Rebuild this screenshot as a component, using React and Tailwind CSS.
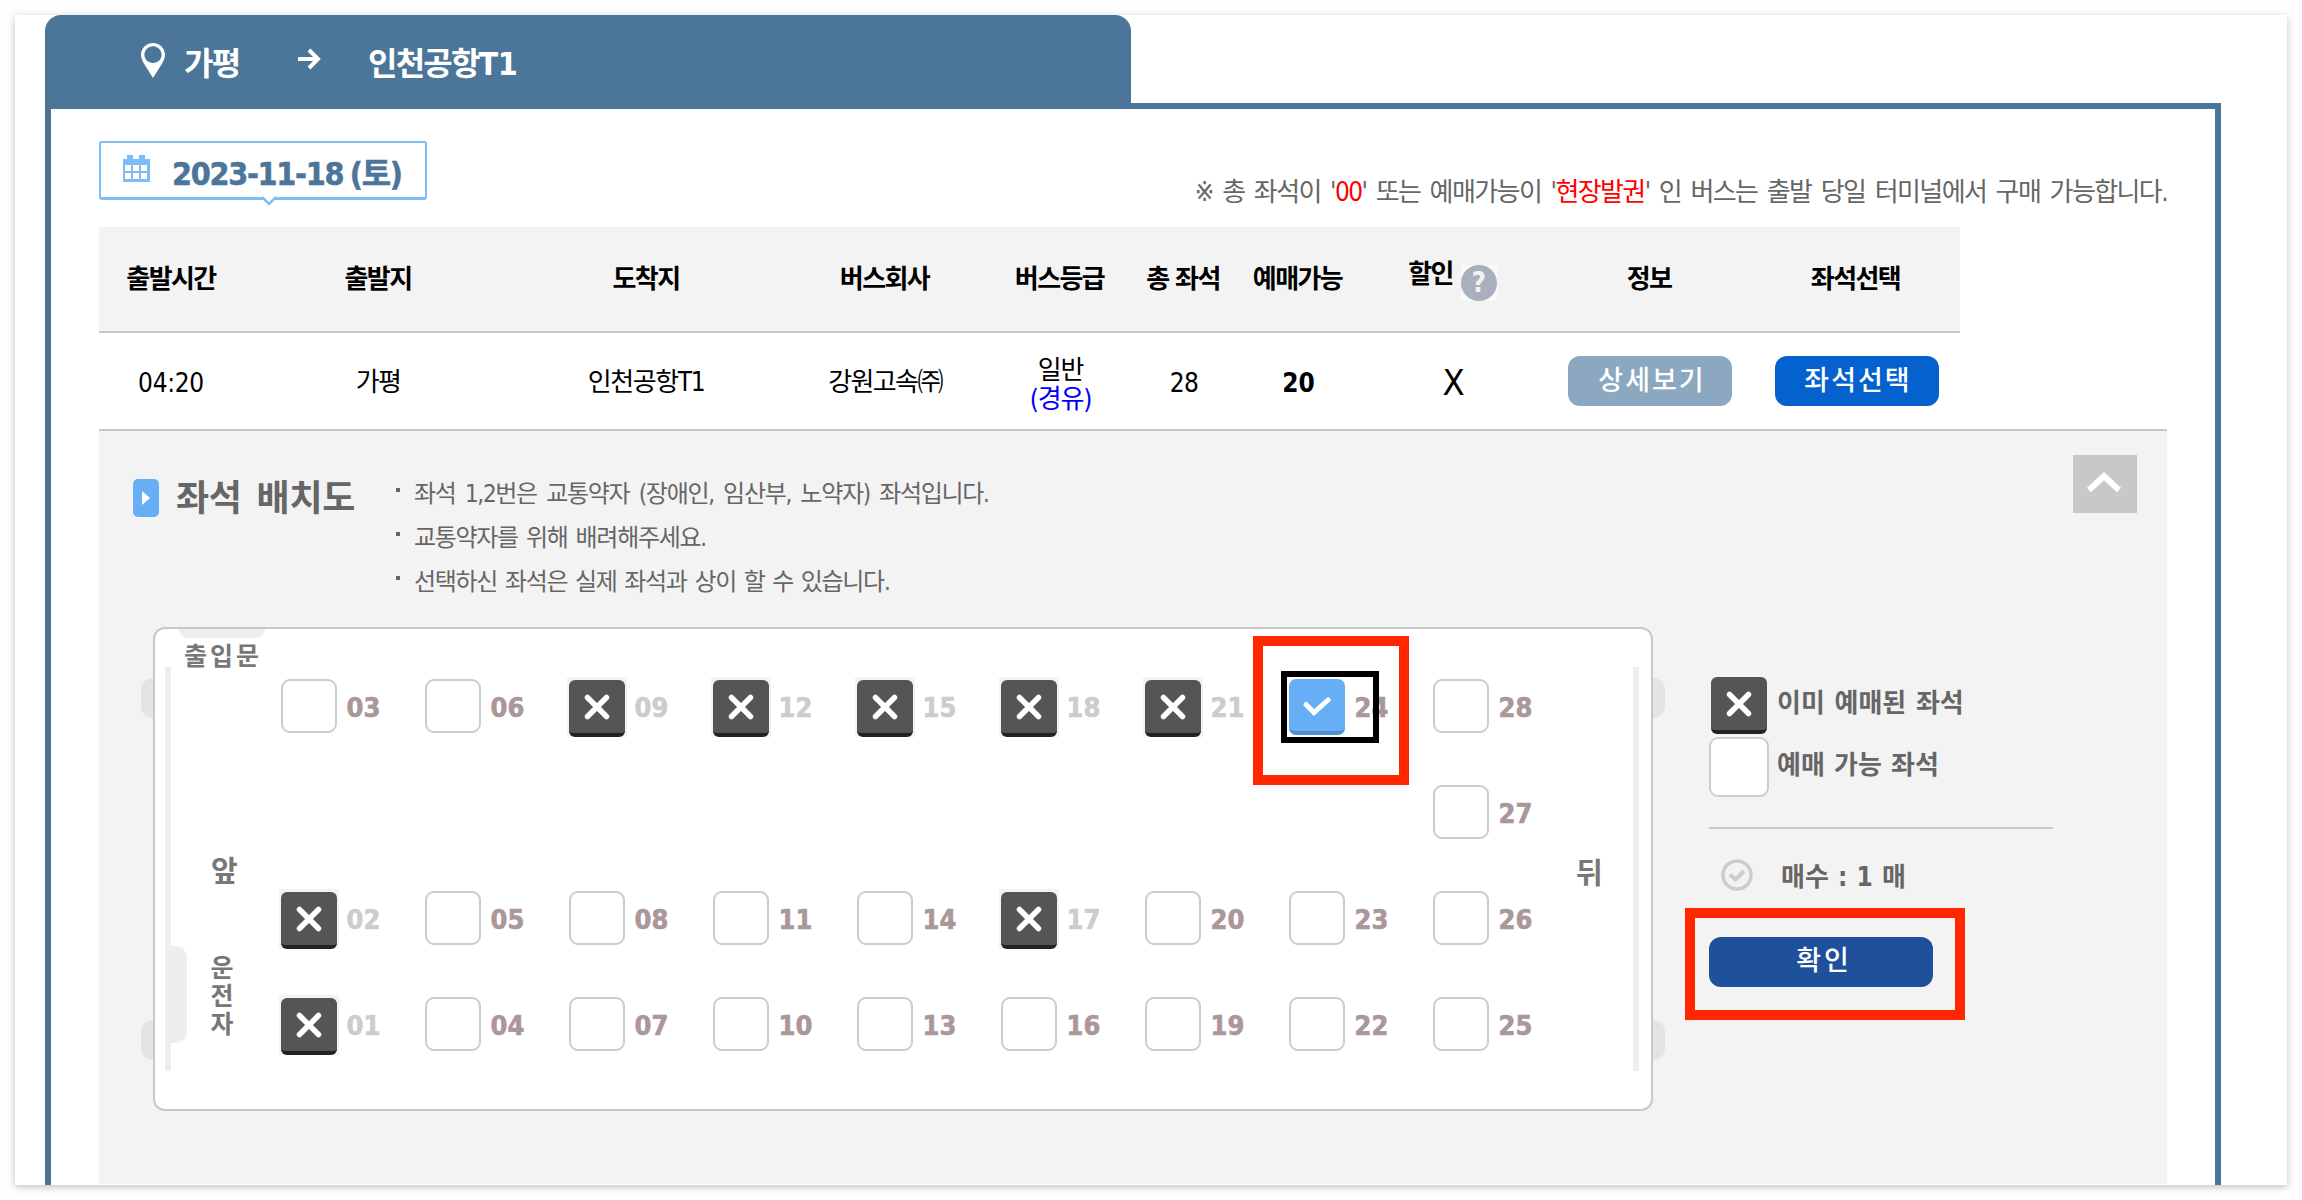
import clsx from 'clsx';

const columns = [
  { label: '출발시간', width: 'w-[144px]' },
  { label: '출발지', width: 'w-[270px]' },
  { label: '도착지', width: 'w-[266px]' },
  { label: '버스회사', width: 'w-[211px]' },
  { label: '버스등급', width: 'w-[139px]' },
  { label: '총 좌석', width: 'w-[108px]' },
  { label: '예매가능', width: 'w-[121px]' },
  { label: '할인', width: 'w-[189px]', help: true },
  { label: '정보', width: 'w-[204px]' },
  { label: '좌석선택', width: 'w-[209px]' },
];

const notices = [
  { text: '좌석 1,2번은 교통약자 (장애인, 임산부, 노약자) 좌석입니다.', spacing: '[word-spacing:3.8px]' },
  { text: '교통약자를 위해 배려해주세요.', spacing: '[word-spacing:2.5px]' },
  { text: '선택하신 좌석은 실제 좌석과 상이 할 수 있습니다.', spacing: '[word-spacing:2.2px]' },
];

// null is the aisle
const seatRows = [
  ['03', '06', '09', '12', '15', '18', '21', '24', '28'],
  [null, null, null, null, null, null, null, null, '27'],
  ['02', '05', '08', '11', '14', '17', '20', '23', '26'],
  ['01', '04', '07', '10', '13', '16', '19', '22', '25'],
];

const reserved = ['01', '02', '09', '12', '15', '17', '18', '21'];
const selected = '24';

const PinIcon = () => (
  <svg width="24" height="35" viewBox="0 0 24 35">
    <path
      fillRule="evenodd"
      fill="#fff"
      d="M12 0C5.2 0 0 5.2 0 11.8c0 3.2 1.2 5.6 2.6 8.2L12 35l9.4-15c1.4-2.6 2.6-5 2.6-8.2C24 5.2 18.8 0 12 0zm0 3.2c4.8 0 8.6 3.8 8.6 8.6 0 4.8-3.8 8.2-8.6 8.2s-8.6-3.4-8.6-8.2C3.4 7 7.2 3.2 12 3.2z"
    />
  </svg>
);

const ArrowIcon = () => (
  <svg width="24" height="22" viewBox="0 0 24 22" fill="none" stroke="#fff" strokeWidth="4">
    <path d="M1 11h19M12 2l9 9-9 9" />
  </svg>
);

const CalendarIcon = () => (
  <svg width="27" height="27" viewBox="0 0 27 27">
    <path fill="#7dbcf6" d="M0 4h4V0h6v4h6V0h6v4h5v23H0z" />
    <g fill="#fff">
      <path d="M2 10h6v6H2zM10 10h6v6h-6zM18 10h6v6h-6zM2 18h6v6H2zM10 18h6v6h-6zM18 18h6v6h-6z" />
    </g>
  </svg>
);

const HelpIcon = () => (
  <span className="flex size-9 items-center justify-center bg-[#fafafa]">
    <span className="flex size-9 items-center justify-center rounded-full bg-[#a7b0bc] text-[28px] leading-none font-bold text-[#f3f3f3]">?</span>
  </span>
);

const ReservedSeat = () => (
  <span className="flex h-15 w-15 shrink-0 items-end justify-center bg-[#f3f3f3]">
    <span className="flex h-[57px] w-14 items-center justify-center rounded-[6px] border-b-4 border-[#222] bg-[#555]">
      <svg width="28" height="28" viewBox="0 0 28 28" fill="none" stroke="#fff" strokeWidth="5.5" strokeLinecap="round">
        <path d="M4.5 4.5l19 19M23.5 4.5l-19 19" />
      </svg>
    </span>
  </span>
);

const SelectedSeat = () => (
  <span className="mx-0.5 mt-0.5 flex h-14 w-14 shrink-0 items-center justify-center rounded-[7px] border-b-4 border-[#508fc9] bg-[#66aff6]">
    <svg className="mt-1" width="28" height="20" viewBox="0 0 28 20" fill="none" stroke="#fff" strokeWidth="5" strokeLinecap="round">
      <path d="M3 7.5l8 8L25 3" />
    </svg>
  </span>
);

const FreeSeat = () => (
  <span className="mx-0.5 mt-0.5 h-[54px] w-14 shrink-0 rounded-[9px] border-2 border-[#ccc] bg-white" />
);

const Seat = ({ no }) => {
  const isReserved = reserved.includes(no);
  const isSelected = no === selected;

  return (
    <div className="relative flex h-[106px] w-36 items-start">
      {isReserved ? <ReservedSeat /> : isSelected ? <SelectedSeat /> : <FreeSeat />}
      <span className={clsx('mt-[15px] ml-[7.5px] text-[27px] leading-8 font-bold [-webkit-text-stroke:0.6px]', isReserved ? 'text-[#ccc]' : 'text-[#ab9699]')}>
        {no}
      </span>
      {isSelected && (
        <>
          <span className="absolute -top-1.5 -left-1.5 h-[72px] w-[98px] border-6 border-black" />
          <span className="absolute top-[-41px] left-[-34px] h-[149px] w-39 border-10 border-[#ff2600]" />
        </>
      )}
    </div>
  );
};

const SeatMap = () => (
  <div className="relative mt-[33px] ml-[54px] h-[484px] w-[1500px] shrink-0 rounded-xl border-2 border-[#c8c8c8] bg-white">
    {/* Wheels */}
    <span className="absolute top-[49px] -left-3.5 h-10 w-3 rounded-l-xl bg-[#e4e4e4]" />
    <span className="absolute top-[391px] -left-3.5 h-10 w-3 rounded-l-xl bg-[#e4e4e4]" />
    <span className="absolute top-[49px] -right-3.5 h-10 w-3 rounded-r-xl bg-[#e4e4e4]" />
    <span className="absolute top-[391px] -right-3.5 h-10 w-3 rounded-r-xl bg-[#e4e4e4]" />

    {/* Door, dashboard and rear wall */}
    <span className="absolute top-0 left-6 h-[9px] w-[86px] rounded-b-xl bg-[#eee]" />
    <span className="absolute top-[38px] left-2.5 h-[404px] w-1.5 bg-[#eee]" />
    <span className="absolute top-[317px] left-4 h-[97px] w-4 rounded-r-xl bg-[#eee]" />
    <span className="absolute top-[38px] right-3 h-[404px] w-1.5 bg-[#eee]" />

    {/* Labels */}
    <span className="absolute top-[10px] left-[29px] text-[25px] leading-9 font-bold tracking-[3px] text-[#777]">출입문</span>
    <span className="absolute top-[225px] left-[56px] text-[29px] leading-9 font-bold text-[#777]">앞</span>
    <span className="absolute top-[326px] left-[53px] flex w-7 flex-col items-center text-[25px] leading-7 font-bold text-[#777]">
      <span>운</span>
      <span>전</span>
      <span>자</span>
    </span>
    <span className="absolute top-[227px] left-[1421px] text-[29px] leading-9 font-bold text-[#777]">뒤</span>

    <div className="grid grid-cols-[repeat(9,144px)] pt-12 pl-[124px]">
      {seatRows.flat().map((no, i) => (no ? <Seat key={no} no={no} /> : <span key={`aisle-${i}`} />))}
    </div>
  </div>
);

const Legend = () => (
  <div className="mt-20 ml-14 w-[344px] font-bold text-[#666]">
    <div className="flex h-[63px] items-start gap-2 text-[26px]">
      <ReservedSeat />
      <span className="mt-[11px] leading-9 [word-spacing:1.5px]">이미 예매된 좌석</span>
    </div>
    <div className="flex h-15 items-start gap-2 text-[26px]">
      <span className="size-15 shrink-0 rounded-[9px] border-2 border-[#ccc] bg-white" />
      <span className="mt-2.5 leading-9 [word-spacing:1px]">예매 가능 좌석</span>
    </div>
    <div className="mt-[30px] h-0.5 bg-[#c8c8c8]" />
    <div className="mt-[30px] ml-3 flex h-8 items-center">
      <svg width="32" height="32" viewBox="0 0 32 32" fill="none" stroke="#ccc">
        <circle cx="16" cy="16" r="14" strokeWidth="3.5" />
        <path d="M9 15.5l5.5 5L23 12" strokeWidth="4" />
      </svg>
      <span className="mt-1 ml-7 text-[26px] leading-9 [word-spacing:1px]">매수 : 1 매</span>
    </div>
    <div className="relative mt-[46px]">
      <button className="block h-[50px] w-56 rounded-xl bg-[#1f509c] pb-0.5 pl-1.5 text-[27px] font-medium tracking-[3px] text-white">확인</button>
      <span className="absolute -top-[29px] -left-6 h-28 w-70 border-10 border-[#ff2600]" />
    </div>
  </div>
);

const ScheduleTable = () => (
  <div>
    <div className="flex h-[106px] w-[1861px] border-b-2 border-[#c8c8c8] bg-[#f3f3f3] text-[26px] font-bold tracking-[-1.6px] text-black">
      {columns.map(col => (
        <div key={col.label} className={clsx('flex shrink-0 items-center justify-center', col.width)}>
          {col.help ? (
            <span className="flex items-center gap-2">
              <span className="-mt-2.5">{col.label}</span>
              <span className="mt-2 tracking-normal"><HelpIcon /></span>
            </span>
          ) : (
            col.label
          )}
        </div>
      ))}
    </div>
    <div className="h-[98px] w-[2068px] border-b-2 border-[#c8c8c8]">
      <div className="flex h-24 w-[1863px] items-center text-center text-[26px] tracking-[-1.6px] text-black">
        <div className="w-[144px] pt-1 tracking-[-0.3px]">04:20</div>
        <div className="w-[270px] pt-0.5">가평</div>
        <div className="w-[266px] pt-0.5 tracking-[-1.4px]">인천공항T1</div>
        <div className="w-[212px] pt-0.5">강원고속㈜</div>
        <div className="w-[139px] pt-[7px] leading-[29px] tracking-[-1.2px]">
          <p>일반</p>
          <p className="text-[#0000ff]">(경유)</p>
        </div>
        <div className="w-[108px] pt-1 tracking-[-0.6px]">28</div>
        <div className="w-[121px] pt-1 font-bold tracking-normal">20</div>
        <div className="w-[189px] pt-1 text-[36px] tracking-normal">X</div>
        <div className="flex w-[204px] justify-center">
          <button className="h-[50px] w-[164px] rounded-xl bg-[#8ca7c0] pl-1 text-[27px] font-medium tracking-[2px] text-white">상세보기</button>
        </div>
        <div className="flex w-[210px] justify-center">
          <button className="h-[50px] w-[164px] rounded-xl bg-[#0561ce] pl-0.5 text-[27px] font-medium tracking-[2px] text-white">좌석선택</button>
        </div>
      </div>
    </div>
  </div>
);

const SeatPanel = () => (
  <div className="h-[753px] w-[2068px] bg-[#f3f3f3]">
    <div className="flex h-[163px] items-start">
      <span className="mt-12 ml-[34px] flex h-[38px] w-[26px] items-center justify-center rounded-[5px] bg-[#66aff6]">
        <svg width="8" height="16" viewBox="0 0 8 16" fill="#fff">
          <path d="M0 1l8 7-8 7z" />
        </svg>
      </span>
      <h2 className="mt-[43px] ml-[17px] w-[220px] text-[36px] leading-[50px] font-bold tracking-[-0.3px] text-[#666] [word-spacing:4px]">좌석 배치도</h2>
      <ul className="mt-[41px] text-[24px] leading-[44px] tracking-[-1.3px] text-[#666]">
        {notices.map(notice => (
          <li key={notice.text} className={clsx('flex', notice.spacing)}>
            <span className="mt-4 mr-3.5 h-1 w-1 bg-[#666]" />
            {notice.text}
          </li>
        ))}
      </ul>
      <button className="mt-6 mr-[30px] ml-auto flex h-[58px] w-16 items-center justify-center bg-[#c8c8c8]">
        <svg className="-mt-1 -ml-0.5" width="36" height="22" viewBox="0 0 36 22" fill="none" stroke="#fff" strokeWidth="6">
          <path d="M3 19L18 5l15 14" />
        </svg>
      </button>
    </div>
    <div className="flex items-start">
      <SeatMap />
      <Legend />
    </div>
  </div>
);

export default function App() {
  return (
    <div className="h-[1200px] w-[2302px] overflow-hidden bg-[#fefefe] p-[15px] font-['DejaVu_Sans_Condensed','Noto_Sans_CJK_KR',sans-serif]">
      <div className="h-[1170px] w-[2272px] overflow-hidden bg-white pl-[30px] shadow-[0_2px_7px_rgba(0,0,0,0.25)]">
        {/* Route tab */}
        <div className="flex h-[88px] w-[1086px] items-start rounded-t-[16px] bg-[#4b7599] pl-24 text-[32px] leading-[48px] font-bold tracking-[-1.8px] text-white">
          <span className="mt-7"><PinIcon /></span>
          <span className="mt-[25px] ml-[19px] w-[113px]">가평</span>
          <span className="mt-[33px]"><ArrowIcon /></span>
          <span className="mt-[25px] ml-[47px]">인천공항<span className="tracking-[-0.5px]">T1</span></span>
        </div>

        <div className="h-[1090px] w-[2176px] border-6 border-[#4b7599] px-12 pt-8">
          <div className="flex h-[86px] items-start justify-between">
            <div className="relative flex h-[59px] w-[328px] items-start rounded-[3px] border-2 border-b-3 border-[#80bdf6] bg-white">
              <span className="mt-3 ml-[22px]"><CalendarIcon /></span>
              <span className="mt-[7px] ml-[22px] text-[32px] leading-[48px] font-bold tracking-[-1.3px] whitespace-nowrap text-[#4b7599] [-webkit-text-stroke:0.5px] [word-spacing:-2px]">2023-11-18 (토)</span>
              <svg className="absolute top-[53px] left-[160px]" width="16" height="10" viewBox="0 0 16 10">
                <path d="M1 0h14L8 8z" fill="#fff" />
                <path d="M1 1l7 7 7-7" fill="none" stroke="#80bdf6" strokeWidth="2.5" />
              </svg>
            </div>
            <p className="mt-8 text-[26px] leading-[38px] tracking-[-1.6px] whitespace-nowrap text-[#666] [word-spacing:3.5px]">
              ※ 총 좌석이 '<span className="text-[#ff0000]">00</span>' 또는 예매가능이 '<span className="text-[#ff0000]">현장발권</span>' 인 버스는 출발 당일 터미널에서 구매 가능합니다.
            </p>
          </div>
          <ScheduleTable />
          <SeatPanel />
        </div>
      </div>
    </div>
  );
}
